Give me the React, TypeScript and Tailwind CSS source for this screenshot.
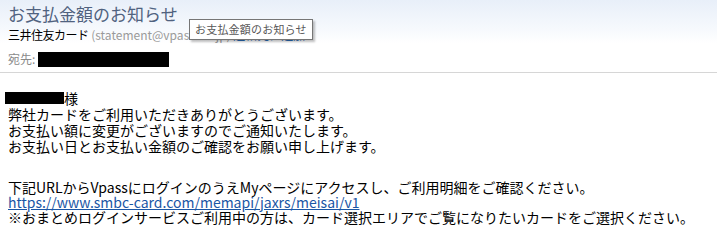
import React from 'react'

const jp = "font-['Noto_Sans_CJK_JP',sans-serif]"

function Header() {
  return (
    <div className="relative h-[73px] border-b border-[#d6d6d6] bg-gradient-to-b from-[#e8eff9] via-[#f6f9fd] via-40% to-white to-60% px-2">
      <h1 className={`${jp} pt-[2px] text-[17px] leading-[24px] text-[#50627f]`}>お支払金額のお知らせ</h1>
      <div className={`${jp} mt-[1px] whitespace-nowrap text-[12px] leading-[16px]`}>
        <span className="tracking-[-0.5px] text-black">三井住友カード</span>
        <span className="text-[#9a9a9a]"> (statement@vpass.ne.jp) </span>
        <span className="text-[#2a6bb5]">連絡先に追加</span>
      </div>
      <div className={`${jp} mt-[8px] flex items-center text-[12px] leading-[16px] text-[#8a8a8a]`}>
        <span>宛先:</span>
        <span className="ml-[3px] inline-block h-[15px] w-[131px] bg-black" />
      </div>

      {/* tooltip */}
      <div className={`${jp} absolute left-[189px] top-[19px] whitespace-nowrap border border-[#767676] bg-white px-[5px] py-[1px] text-[11px] leading-[17px] tracking-[0.2px] text-[#575757] shadow-[2px_2px_2px_rgba(0,0,0,0.25)]`}>
        お支払金額のお知らせ
      </div>
    </div>
  )
}

export default function App() {
  return (
    <div className="h-[246px] w-[717px] overflow-hidden bg-white">
      <Header />
      <div className={`${jp} px-2 text-[14px] text-black`}>
        <div className="pt-[17px] leading-[16px]">
          <div className="flex items-center">
            <span className="-ml-[3px] inline-block h-[12px] w-[59px] bg-black" />
            <span>様</span>
          </div>
          <div>弊社カードをご利用いただきありがとうございます。</div>
          <div>お支払い額に変更がございますのでご通知いたします。</div>
          <div>お支払い日とお支払い金額のご確認をお願い申し上げます。</div>
        </div>
        <div className="pt-[26px] leading-[15px]">
          <div>下記URLからVpassにログインのうえMyページにアクセスし、ご利用明細をご確認ください。</div>
          <div>
            <a className="text-[#1a56a5] underline" href="#">https://www.smbc-card.com/memapi/jaxrs/meisai/v1</a>
          </div>
          <div>※おまとめログインサービスご利用中の方は、カード選択エリアでご覧になりたいカードをご選択ください。</div>
        </div>
      </div>
    </div>
  )
}
